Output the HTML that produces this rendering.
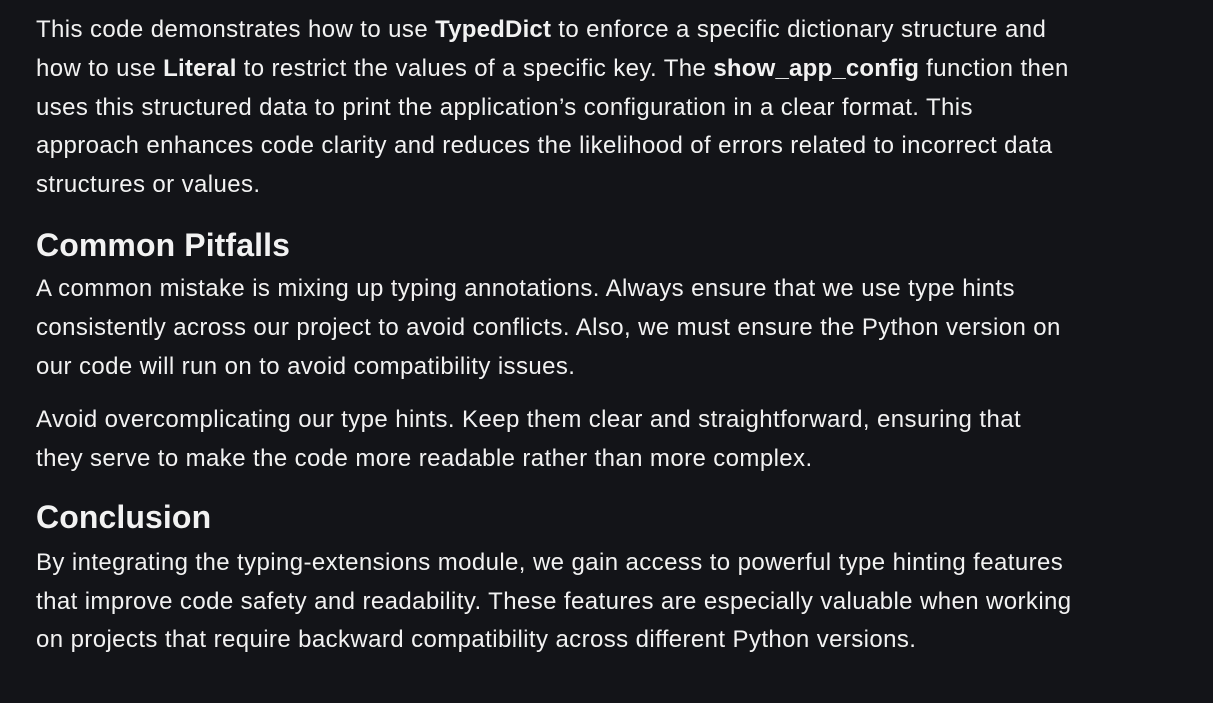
<!DOCTYPE html>
<html><head><meta charset="utf-8"><style>
html,body{margin:0;padding:0;background:#131418;width:1213px;height:703px;overflow:hidden}
body{font-family:"Liberation Sans",sans-serif;color:#f2f2f2;font-size:24px;letter-spacing:0.4px;position:relative}
.l{position:absolute;left:36px;white-space:nowrap;line-height:30px;height:30px}
.h{font-size:32px;letter-spacing:0.1px;font-weight:bold;line-height:36px;height:36px}
b{font-weight:bold;letter-spacing:0.2px}
</style></head><body>
<div class="l" style="top:15px">This code demonstrates how to use <b>TypedDict</b> to enforce a specific dictionary structure and</div>
<div class="l" style="top:54px">how to use <b>Literal</b> to restrict the values of a specific key. The <b>show_app_config</b> function then</div>
<div class="l" style="top:93px">uses this structured data to print the application’s configuration in a clear format. This</div>
<div class="l" style="top:131px">approach enhances code clarity and reduces the likelihood of errors related to incorrect data</div>
<div class="l" style="top:170px">structures or values.</div>
<div class="l h" style="top:227px">Common Pitfalls</div>
<div class="l" style="top:274px">A common mistake is mixing up typing annotations. Always ensure that we use type hints</div>
<div class="l" style="top:313px">consistently across our project to avoid conflicts. Also, we must ensure the Python version on</div>
<div class="l" style="top:352px">our code will run on to avoid compatibility issues.</div>
<div class="l" style="top:405px">Avoid overcomplicating our type hints. Keep them clear and straightforward, ensuring that</div>
<div class="l" style="top:444px">they serve to make the code more readable rather than more complex.</div>
<div class="l h" style="top:499px">Conclusion</div>
<div class="l" style="top:548px">By integrating the typing-extensions module, we gain access to powerful type hinting features</div>
<div class="l" style="top:587px">that improve code safety and readability. These features are especially valuable when working</div>
<div class="l" style="top:625px">on projects that require backward compatibility across different Python versions.</div>
</body></html>
